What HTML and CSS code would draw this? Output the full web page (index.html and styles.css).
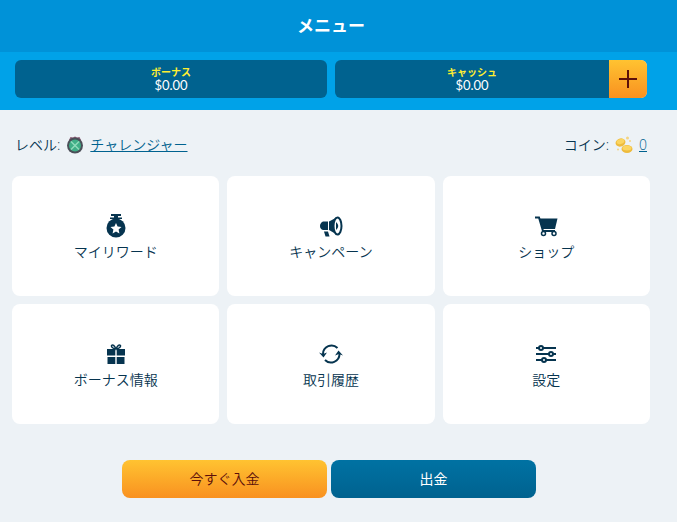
FILE: index.html
```html
<!DOCTYPE html>
<html lang="ja">
  <head>
    <meta charset="UTF-8">
    <meta name="viewport" content="width=device-width, initial-scale=1">
    <title>メニュー</title>
    <link rel="stylesheet" href="styles.css">
  </head>

  <body>
    <header class="menu-header">
      <h1>メニュー</h1>
    </header>

    <div class="balance-bar">
      <div class="balance">
        <div class="balance-info">
          <span class="balance-label">ボーナス</span>
          <span class="balance-value">$0.00</span>
        </div>
      </div>
      <div class="balance">
        <div class="balance-info">
          <span class="balance-label">キャッシュ</span>
          <span class="balance-value">$0.00</span>
        </div>
        <button class="balance-add" type="button" aria-label="入金">
          <svg width="18" height="18" viewBox="0 0 18 18"><path d="M9 0V18M0 9H18" stroke="#5c0f0a" stroke-width="2" fill="none"/></svg>
        </button>
      </div>
    </div>

    <main class="menu">
      <div class="status">
        <div class="status-item">
          <span>レベル:</span>
          <svg width="18" height="18" viewBox="0 0 18 18">
            <path d="M3 4L4.500 1L7 1.500L9 0.500L11 1.500L13.500 1L15 4Z" fill="#8a5a74"/>
            <circle cx="9" cy="9.500" r="8" fill="#4b4f58"/>
            <circle cx="9" cy="9.500" r="6" fill="#3fae86"/>
            <path d="M5 5.500L13 13.500M13 5.500L5 13.500" stroke="#8fdcba" stroke-width="1.500"/>
          </svg>
          <a href="#">チャレンジャー</a>
        </div>
        <div class="status-item">
          <span>コイン:</span>
          <svg width="18" height="18" viewBox="0 0 18 18">
            <ellipse cx="5.500" cy="6.500" rx="5" ry="4" fill="#eebb3c" transform="rotate(-20 5.500 6.500)"/>
            <ellipse cx="5.500" cy="5.500" rx="4" ry="2.500" fill="#fbd560" transform="rotate(-20 5.500 5.500)"/>
            <ellipse cx="12" cy="13" rx="5.500" ry="4" fill="#eebb3c"/>
            <ellipse cx="12" cy="12" rx="4.500" ry="2.500" fill="#fbd560"/>
            <circle cx="12.500" cy="2" r="1.500" fill="#f3d483"/>
            <circle cx="15" cy="5" r="1" fill="#f3d483"/>
            <circle cx="3" cy="13.500" r="1" fill="#f3d483"/>
          </svg>
          <a href="#">0</a>
        </div>
      </div>

      <nav class="tiles">
        <a class="tile" href="#">
          <svg width="24" height="24" viewBox="0 0 24 24">
            <path d="M7 0H17V2H14V3.500H18V5H6V3.500H10V2H7Z" fill="#06344f"/>
            <circle cx="12" cy="14" r="9.500" fill="#06344f"/>
            <path d="M12 9L13.600 12.600L17.500 13L14.600 15.600L15.400 19.500L12 17.500L8.600 19.500L9.400 15.600L6.500 13L10.400 12.600Z" fill="#fff"/>
          </svg>
          <span>マイリワード</span>
        </a>
        <a class="tile" href="#">
          <svg width="24" height="24" viewBox="0 0 24 24">
            <path d="M9 7.500V16H4Q1 15 1 12T4 7.500Z" fill="#06344f"/>
            <path d="M5 17.500H9L10.500 22.500H6.500Z" fill="#06344f"/>
            <path d="M10 7.500L19.500 2.500V21.500L10 16Z" fill="#06344f"/>
            <ellipse cx="18.500" cy="12" rx="4" ry="8.500" fill="#fff" stroke="#06344f" stroke-width="2"/>
            <path d="M17 8Q21.500 12 17 16Z" fill="#06344f"/>
          </svg>
          <span>キャンペーン</span>
        </a>
        <a class="tile" href="#">
          <svg width="24" height="24" viewBox="0 0 24 24">
            <path d="M1 3.500H5L9 17H21" fill="none" stroke="#06344f" stroke-width="2"/>
            <path d="M5.500 4.500H23.500L21 15H8.500Z" fill="#06344f"/>
            <circle cx="9.500" cy="19.500" r="2" fill="#fff" stroke="#06344f" stroke-width="1.500"/>
            <circle cx="20" cy="19.500" r="2" fill="#fff" stroke="#06344f" stroke-width="1.500"/>
          </svg>
          <span>ショップ</span>
        </a>
        <a class="tile" href="#">
          <svg width="24" height="24" viewBox="0 0 24 24">
            <path d="M12 7Q7 6 7.500 3.500Q9.500 1.500 12 7Q14.500 1.500 16.500 3.500Q17 6 12 7Z" fill="none" stroke="#06344f" stroke-width="1.500"/>
            <path d="M3 7H11.300V13.500H3ZM12.700 7H21V13.500H12.700ZM3.500 15H11.300V22H3.500ZM12.700 15H20.500V22H12.700Z" fill="#06344f"/>
          </svg>
          <span>ボーナス情報</span>
        </a>
        <a class="tile" href="#">
          <svg width="24" height="24" viewBox="0 0 24 24">
            <path d="M4 12A8.500 8.500 0 0 1 18.500 6M20.500 12A8.500 8.500 0 0 1 6 18" fill="none" stroke="#06344f" stroke-width="2"/>
            <path d="M0 10.500L4 12L8 10.500L4.500 15.500ZM24 13.500L20 12L16 13.500L19.500 8.500Z" fill="#06344f"/>
          </svg>
          <span>取引履歴</span>
        </a>
        <a class="tile" href="#">
          <svg width="24" height="24" viewBox="0 0 24 24">
            <path d="M2 6H22M2 12H22M2 18H22" stroke="#06344f" stroke-width="2"/>
            <g fill="#fff" stroke="#06344f" stroke-width="2">
              <circle cx="7" cy="6" r="2"/>
              <circle cx="17" cy="12" r="2"/>
              <circle cx="10" cy="18" r="2"/>
            </g>
          </svg>
          <span>設定</span>
        </a>
      </nav>

      <div class="actions">
        <button class="action action-deposit" type="button">今すぐ入金</button>
        <button class="action action-withdraw" type="button">出金</button>
      </div>
    </main>
  </body>
</html>
```
FILE: styles.css
```css
* {
  box-sizing: border-box;
}

body {
  margin: 0;
  background-color: #edf2f6;
  color: #06344f;
  font-family: "Open Sans", "Noto Sans CJK JP", sans-serif;
  font-size: 14px;
  font-weight: 350;
  line-height: 20px;
}

button {
  border: 0;
  padding: 0;
  font: inherit;
  cursor: pointer;
}

svg {
  display: block;
  flex: none;
}

.menu-header {
  padding: 12px 15px 12px 0;
  background-color: #0092d8;
  color: #fff;
  text-align: center;
}

.menu-header h1 {
  margin: 0;
  font-size: 17px;
  font-weight: 700;
  line-height: 28px;
}

.balance-bar {
  display: flex;
  gap: 8px;
  padding: 8px 30px 12px 15px;
  background-color: #00a2e8;
}

.balance {
  flex: 1;
  display: flex;
  height: 38px;
  border-radius: 6px;
  background-color: #00628f;
  overflow: hidden;
}

.balance-info {
  flex: 1;
  display: flex;
  flex-direction: column;
  align-items: center;
  justify-content: center;
  font-family: Lato, "Noto Sans CJK JP", sans-serif;
  line-height: 13px;
}

.balance-label {
  color: #ffee32;
  font-size: 10px;
  font-weight: 700;
}

.balance-value {
  color: #fff;
  font-size: 13px;
  font-weight: 400;
}

.balance-add {
  display: flex;
  align-items: center;
  justify-content: center;
  width: 38px;
  background-image: linear-gradient(#ffc331, #f99120);
}

.menu {
  padding: 24px 27px 24px 12px;
}

.status {
  display: flex;
  justify-content: space-between;
  padding: 0 3px;
  margin-bottom: 20px;
}

.status-item {
  display: flex;
  align-items: center;
  gap: 6px;
  line-height: 22px;
}

.status-item a {
  color: #00628f;
}

.tiles {
  display: grid;
  grid-template-columns: repeat(3, 1fr);
  gap: 8px;
}

.tile {
  display: flex;
  flex-direction: column;
  align-items: center;
  justify-content: center;
  gap: 4px;
  height: 120px;
  padding-top: 4px;
  border-radius: 8px;
  background-color: #fff;
  color: inherit;
  text-decoration: none;
}

.actions {
  display: flex;
  justify-content: center;
  gap: 4px;
  margin-top: 36px;
  padding-right: 4px;
}

.action {
  width: 205px;
  height: 38px;
  border-radius: 8px;
}

.action-deposit {
  background-image: linear-gradient(#ffc331, #f99120);
  color: #5c0f0a;
}

.action-withdraw {
  background-image: linear-gradient(#0072a3, #00628f);
  color: #fff;
  font-weight: 400;
}
```
